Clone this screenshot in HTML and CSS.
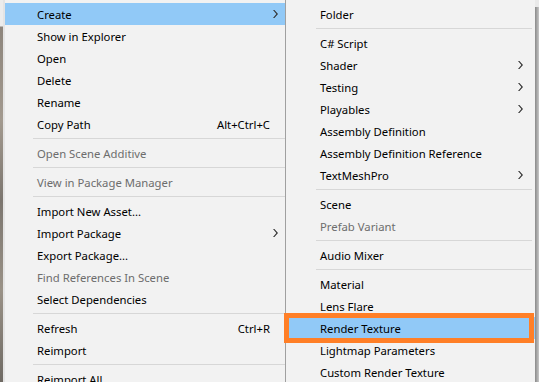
FILE: index.html
```html
<!DOCTYPE html>
<html lang="en">
<head>
  <meta charset="UTF-8" />
  <title>Project context menu</title>
  <link rel="stylesheet" href="styles.css">
</head>
<body>
  <div class="backdrop"></div>

  <!-- main context menu -->
  <div class="menu main-menu">
    <div class="item active">Create<span class="arrow"></span></div>
    <div class="item">Show in Explorer</div>
    <div class="item">Open</div>
    <div class="item">Delete</div>
    <div class="item">Rename</div>
    <div class="item">Copy Path<span class="shortcut">Alt+Ctrl+C</span></div>
    <div class="sep"></div>
    <div class="item disabled">Open Scene Additive</div>
    <div class="sep"></div>
    <div class="item disabled">View in Package Manager</div>
    <div class="sep"></div>
    <div class="item">Import New Asset...</div>
    <div class="item">Import Package<span class="arrow"></span></div>
    <div class="item">Export Package...</div>
    <div class="item disabled">Find References In Scene</div>
    <div class="item">Select Dependencies</div>
    <div class="sep"></div>
    <div class="item">Refresh<span class="shortcut">Ctrl+R</span></div>
    <div class="item">Reimport</div>
    <div class="sep"></div>
    <div class="item">Reimport All</div>
  </div>

  <!-- Create submenu -->
  <div class="menu sub-menu">
    <div class="item">Folder</div>
    <div class="sep"></div>
    <div class="item">C# Script</div>
    <div class="item">Shader<span class="arrow"></span></div>
    <div class="item">Testing<span class="arrow"></span></div>
    <div class="item">Playables<span class="arrow"></span></div>
    <div class="item">Assembly Definition</div>
    <div class="item">Assembly Definition Reference</div>
    <div class="item">TextMeshPro<span class="arrow"></span></div>
    <div class="sep"></div>
    <div class="item">Scene</div>
    <div class="item disabled">Prefab Variant</div>
    <div class="sep"></div>
    <div class="item">Audio Mixer</div>
    <div class="sep"></div>
    <div class="item">Material</div>
    <div class="item">Lens Flare</div>
    <div class="item active">Render Texture</div>
    <div class="item">Lightmap Parameters</div>
    <div class="item">Custom Render Texture</div>
  </div>

  <div class="menu-shadow"></div>

  <!-- orange annotation box -->
  <div class="callout"></div>
</body>
</html>
```

FILE: styles.css
```css
* {
  margin: 0;
  padding: 0;
  box-sizing: border-box;
}

html, body {
  width: 539px;
  height: 382px;
  overflow: hidden;
}

body {
  display: flex;
  align-items: flex-start;
  background: #e9e9e9;
  font-family: 'Noto Sans', 'Open Sans', sans-serif;
  font-size: 11.3px;
  color: #000;
  position: relative;
}

.backdrop {
  width: 5px;
  height: 382px;
  background: linear-gradient(180deg, #ececec 0, #ececec 26px, #8d857c 27px, #a39a8f 120px, #7c766f 200px, #9a9287 290px, #6f6a64 382px);
  border-right: 2px solid #e4e4e4;
}

.menu {
  background: #f2f2f2;
  padding-top: 3px;
  height: 382px;
}

.main-menu {
  width: 281px;
  border-right: 1px solid #a0a0a0;
}

.sub-menu {
  width: 249px;
}

.item {
  height: 22px;
  display: flex;
  align-items: center;
  justify-content: space-between;
  white-space: nowrap;
}

.main-menu .item {
  padding: 0 7px 0 32px;
}

.sub-menu .item {
  padding: 0 12px 0 34px;
}

.item.active {
  background: #91c9f7;
}

.item.disabled {
  color: #6d6d6d;
}

.shortcut {
  margin-right: 8px;
}

.arrow {
  width: 5px;
  height: 8px;
  background: #333;
  clip-path: polygon(0 0, 1.4px 0, 100% 50%, 1.4px 100%, 0 100%, 3.4px 50%);
}

.sep {
  height: 7px;
  display: flex;
  align-items: center;
}

.sep::after {
  content: '';
  display: block;
  flex: 1;
  height: 1px;
  background: #d7d7d7;
}

.main-menu .sep {
  padding-left: 28px;
}

.sub-menu .sep {
  padding: 0 3px 0 30px;
}

.menu-shadow {
  width: 4px;
  height: 375px;
  margin-top: 7px;
  background: linear-gradient(90deg, #8a8a8a, #a8a8a8 50%, #c8c8c8);
}

.callout {
  position: absolute;
  left: 284px;
  top: 313px;
  width: 250px;
  height: 30px;
  border: 5px solid #ff7f27;
}
```
